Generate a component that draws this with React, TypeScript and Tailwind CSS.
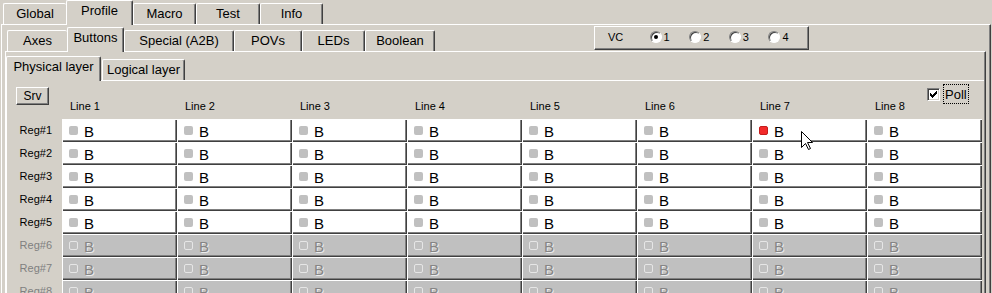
import React from "react";

type TabProps = {
  label: string;
  w: string;
  selected?: boolean;
  noRight?: boolean;
  ml?: string;
};

function Tab({ label, w, selected, noRight, ml = "" }: TabProps) {
  const base = `${w} ${ml} flex justify-center pt-[2px] text-[13px] leading-[15px] whitespace-nowrap bg-[#d4d0c8] border-l border-t border-white rounded-tl-[2px] rounded-tr-[2px]`;
  const right = noRight
    ? ""
    : "border-r border-r-[#404040] shadow-[inset_-1px_0_0_#808080]";
  const state = selected ? "relative z-10 h-[25px]" : "h-[21px] mb-[1px]";
  return <div className={`${base} ${right} ${state}`}>{label}</div>;
}

function Radio({ n, checked }: { n: number; checked?: boolean }) {
  return (
    <div className="w-[41px] flex items-center">
      <div className="w-[12px] h-[12px] rounded-full bg-white border border-t-[#808080] border-l-[#808080] border-r-white border-b-white shadow-[inset_1px_1px_0_#404040] flex items-center justify-center">
        {checked ? <div className="w-[4px] h-[4px] rounded-full bg-black" /> : null}
      </div>
      <span className="ml-[2px]">{n}</span>
    </div>
  );
}

function Cell({ red, disabled }: { red?: boolean; disabled?: boolean }) {
  return (
    <div
      className={`w-[115px] h-[23px] flex items-center ${
        disabled ? "bg-[#c0c0c0]" : "bg-white"
      } shadow-[inset_1px_1px_0_#ffffff,inset_-1px_-1px_0_#404040,inset_-2px_-2px_0_#808080]`}
    >
      {disabled ? (
        <div className="ml-[7px] w-[9px] h-[9px] rounded-[2px] border border-[#e6e6e6]" />
      ) : red ? (
        <div className="ml-[7px] w-[9px] h-[9px] rounded-[2px] bg-[#f22a2a] border border-[#c41c1c]" />
      ) : (
        <div className="ml-[7px] w-[9px] h-[9px] rounded-[2px] bg-[#c0c0c0]" />
      )}
      <span
        className={`ml-[6px] mt-[2px] text-[15px] leading-none ${
          disabled ? "text-[#858585] [text-shadow:1px_1px_0_#ececec]" : "text-black"
        }`}
      >
        B
      </span>
    </div>
  );
}

const COLS = [1, 2, 3, 4, 5, 6, 7, 8];
const ROWS = [1, 2, 3, 4, 5, 6, 7, 8];

export default function App() {
  return (
    <div className="relative w-[992px] h-[293px] overflow-hidden bg-[#d4d0c8] text-black font-['Liberation_Sans',Arial,sans-serif]">
      {/* top level tabs */}
      <div className="flex items-end h-[25px] pl-[3px]">
        <Tab label="Global" w="w-[63px]" noRight />
        <Tab label="Profile" w="w-[67px]" selected />
        <Tab label="Macro" w="w-[63px]" />
        <Tab label="Test" w="w-[64px]" />
        <Tab label="Info" w="w-[63px]" />
      </div>

      {/* outer panel */}
      <div className="-mt-px ml-[1px] w-[990px] h-[290px] border-l border-t border-white border-r border-r-[#404040] shadow-[inset_-1px_0_0_#808080]">
        {/* second level tabs + VC */}
        <div className="flex items-end h-[27px] pl-[5px]">
          <Tab label="Axes" w="w-[60px]" noRight />
          <Tab label="Buttons" w="w-[57px]" selected />
          <Tab label="Special (A2B)" w="w-[110px]" />
          <Tab label="POVs" w="w-[68px]" />
          <Tab label="LEDs" w="w-[63px]" />
          <Tab label="Boolean" w="w-[70px]" />
          <div className="self-start mt-[1px] ml-[159px] w-[215px] h-[24px] flex items-center pb-[2px] text-[11px] leading-[13px] border-l border-t border-white border-r border-b border-r-[#404040] border-b-[#404040] shadow-[inset_-1px_-1px_0_#808080]">
            <span className="ml-[13px] w-[43px]">VC</span>
            <Radio n={1} checked />
            <Radio n={2} />
            <Radio n={3} />
            <Radio n={4} />
          </div>
        </div>

        {/* second panel */}
        <div className="-mt-px ml-[3px] w-[981px] h-[270px] border-l border-t border-white border-r border-r-[#404040] shadow-[inset_-1px_0_0_#808080]">
          {/* third level tabs */}
          <div className="flex items-end h-[29px]">
            <Tab label="Physical layer" w="w-[95px]" selected />
            <Tab label="Logical layer" w="w-[83px]" ml="ml-[1px]" />
          </div>

          {/* third panel */}
          <div className="-mt-px w-[978px] border-l border-t border-white">
            {/* header */}
            <div className="flex h-[38px]">
              <div className="w-[55px]">
                <div className="ml-[9px] mt-[6px] w-[33px] h-[18px] flex items-center justify-center text-[12px] leading-none border-l border-t border-white border-r border-b border-r-[#404040] border-b-[#404040] shadow-[inset_-1px_-1px_0_#808080]">
                  Srv
                </div>
              </div>
              {COLS.map((c) =>
                c === 8 ? (
                  <div key={c} className="w-[115px] h-[38px] flex flex-col">
                    <div className="flex items-center ml-[60px] mt-[3px] h-[20px]">
                      <div className="w-[13px] h-[13px] bg-white border border-t-[#808080] border-l-[#808080] border-r-white border-b-white shadow-[inset_1px_1px_0_#404040,inset_-1px_-1px_0_#d4d0c8] flex items-center justify-center">
                        <svg width="7" height="7" viewBox="0 0 7 7" shapeRendering="crispEdges">
                          <rect x="6" y="0" width="1" height="3" fill="#000" />
                          <rect x="5" y="1" width="1" height="3" fill="#000" />
                          <rect x="4" y="2" width="1" height="3" fill="#000" />
                          <rect x="3" y="3" width="1" height="3" fill="#000" />
                          <rect x="2" y="4" width="1" height="3" fill="#000" />
                          <rect x="1" y="3" width="1" height="3" fill="#000" />
                          <rect x="0" y="2" width="1" height="3" fill="#000" />
                        </svg>
                      </div>
                      <span className="ml-[3px] h-[20px] px-[1px] flex items-center text-[13px] leading-none border border-dotted border-black">
                        Poll
                      </span>
                    </div>
                    <div className="-mt-[4px] pl-[8px] text-[11px] leading-[13px]">Line {c}</div>
                  </div>
                ) : (
                  <div key={c} className="w-[115px] h-[38px] flex flex-col justify-end pb-[6px]">
                    <div className="pl-[8px] text-[11px] leading-[13px]">Line {c}</div>
                  </div>
                )
              )}
            </div>

            {/* rows */}
            {ROWS.map((r) => {
              const disabled = r > 5;
              return (
                <div key={r} className="flex h-[23px]">
                  <div
                    className={`w-[55px] pr-[10px] text-right text-[11px] leading-[23px] ${
                      disabled ? "text-[#808080]" : "text-black"
                    }`}
                  >
                    Reg#{r}
                  </div>
                  {COLS.map((c) => (
                    <Cell key={c} disabled={disabled} red={r === 1 && c === 7} />
                  ))}
                </div>
              );
            })}
          </div>
        </div>
      </div>

      {/* mouse cursor */}
      <svg
        className="absolute left-[801px] top-[131px]"
        width="13"
        height="20"
        viewBox="0 0 13 20"
      >
        <path
          d="M0.5 0.5 L0.5 16.5 L4.5 12.5 L7.5 18.5 L9.5 17.5 L6.5 11.5 L11.5 11.5 Z"
          fill="#ffffff"
          stroke="#000000"
          strokeWidth="1"
          strokeLinejoin="miter"
        />
      </svg>
    </div>
  );
}
